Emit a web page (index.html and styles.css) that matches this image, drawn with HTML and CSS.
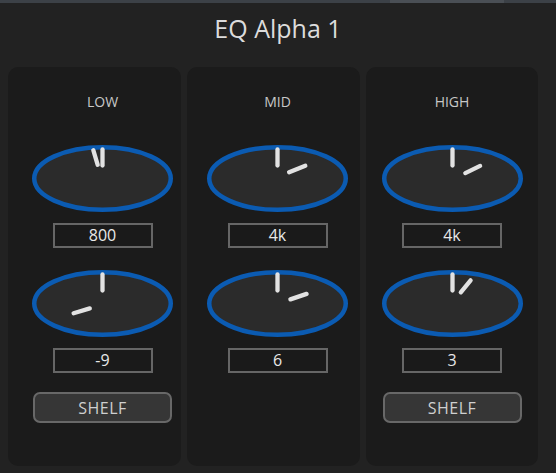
FILE: index.html
```html
<!DOCTYPE html>
<html>
<head>
<meta charset="utf-8">
<link rel="stylesheet" href="styles.css">
</head>
<body>
<div class="topbar"><div class="topbar-thumb"></div></div>
<h1 class="title">EQ Alpha 1</h1>
<div class="bands">
  <section class="panel panel-low">
    <div class="band-label">LOW</div>
    <svg class="knob" viewBox="0 0 141 67" width="141" height="67">
      <ellipse class="knob-ring" cx="70.5" cy="33.5" rx="68.25" ry="31.25"/>
      <line class="knob-line" x1="70.5" y1="4.5" x2="70.5" y2="20.5"/>
      <line class="knob-line" x1="65.7" y1="19.8" x2="61.3" y2="5.2"/>
    </svg>
    <div class="value">800</div>
    <svg class="knob knob-gain" viewBox="0 0 141 67" width="141" height="67">
      <ellipse class="knob-ring" cx="70.5" cy="33.5" rx="68.25" ry="31.25"/>
      <line class="knob-line" x1="70.5" y1="4.5" x2="70.5" y2="20.5"/>
      <line class="knob-line" x1="41.6" y1="43.2" x2="57.8" y2="38.4"/>
    </svg>
    <div class="value">-9</div>
    <button class="shelf">SHELF</button>
  </section>
  <section class="panel panel-mid">
    <div class="band-label">MID</div>
    <svg class="knob" viewBox="0 0 141 67" width="141" height="67">
      <ellipse class="knob-ring" cx="70.5" cy="33.5" rx="68.25" ry="31.25"/>
      <line class="knob-line" x1="70.5" y1="4.5" x2="70.5" y2="20.5"/>
      <line class="knob-line" x1="82.1" y1="27.3" x2="98.3" y2="20.7"/>
    </svg>
    <div class="value">4k</div>
    <svg class="knob knob-gain" viewBox="0 0 141 67" width="141" height="67">
      <ellipse class="knob-ring" cx="70.5" cy="33.5" rx="68.25" ry="31.25"/>
      <line class="knob-line" x1="70.5" y1="4.5" x2="70.5" y2="20.5"/>
      <line class="knob-line" x1="83.4" y1="29.4" x2="99.6" y2="23.9"/>
    </svg>
    <div class="value">6</div>
  </section>
  <section class="panel panel-high">
    <div class="band-label">HIGH</div>
    <svg class="knob" viewBox="0 0 141 67" width="141" height="67">
      <ellipse class="knob-ring" cx="70.5" cy="33.5" rx="68.25" ry="31.25"/>
      <line class="knob-line" x1="70.5" y1="4.5" x2="70.5" y2="20.5"/>
      <line class="knob-line" x1="83.3" y1="28.1" x2="98.1" y2="20.9"/>
    </svg>
    <div class="value">4k</div>
    <svg class="knob knob-gain" viewBox="0 0 141 67" width="141" height="67">
      <ellipse class="knob-ring" cx="70.5" cy="33.5" rx="68.25" ry="31.25"/>
      <line class="knob-line" x1="70.5" y1="4.5" x2="70.5" y2="20.5"/>
      <line class="knob-line" x1="78.8" y1="22.3" x2="88.6" y2="10.3"/>
    </svg>
    <div class="value">3</div>
    <button class="shelf">SHELF</button>
  </section>
</div>
</body>
</html>
```

FILE: styles.css
```css
html, body {
  margin: 0;
  padding: 0;
  background: #222222;
  font-family: "Open Sans", "Noto Sans", "DejaVu Sans", sans-serif;
  height: 473px;
  overflow: hidden;
}

.topbar {
  height: 3px;
  background: #3c4147;
  display: flex;
}

.topbar-thumb {
  margin-left: 390px;
  width: 114px;
  background: #4a4f55;
}

.title {
  margin: 0;
  padding-top: 9px;
  height: 32px;
  line-height: 32px;
  font-size: 25px;
  font-weight: 400;
  color: #dcdcdc;
  text-align: center;
}

.bands {
  margin-top: 23px;
  padding-left: 8px;
  display: grid;
  grid-template-columns: 173px 173px 172px;
  column-gap: 6px;
}

.panel {
  height: 399px;
  background: #1b1b1b;
  border-radius: 10px;
  display: flex;
  flex-direction: column;
  align-items: center;
  box-sizing: border-box;
  padding-top: 27px;
}

.panel-low { padding-left: 16px; }
.panel-mid { padding-left: 8px; }
.panel-high { padding-left: 0; }

.band-label {
  font-size: 14px;
  line-height: 16px;
  color: #c8c8c8;
}

.knob {
  display: block;
  margin-top: 35px;
}

.knob-gain {
  margin-top: 22px;
}

.knob-ring {
  fill: #2b2b2b;
  stroke: #0b5bb2;
  stroke-width: 4.5;
}

.knob-line {
  stroke: #e2e2e2;
  stroke-width: 4.3;
  stroke-linecap: round;
}

.value {
  margin-top: 11px;
  width: 100px;
  height: 25px;
  box-sizing: border-box;
  border: 2px solid #666666;
  background: #1a1a1a;
  color: #e8e8e8;
  font-size: 16px;
  line-height: 21px;
  text-align: center;
}

.shelf {
  margin-top: 19px;
  width: 139px;
  height: 31px;
  box-sizing: border-box;
  border: 2px solid #686868;
  border-radius: 7px;
  background: #363636;
  color: #cfcfcf;
  font-family: "Open Sans", "Noto Sans", "DejaVu Sans", sans-serif;
  font-size: 16px;
  letter-spacing: 0.5px;
  padding: 0;
}
```
